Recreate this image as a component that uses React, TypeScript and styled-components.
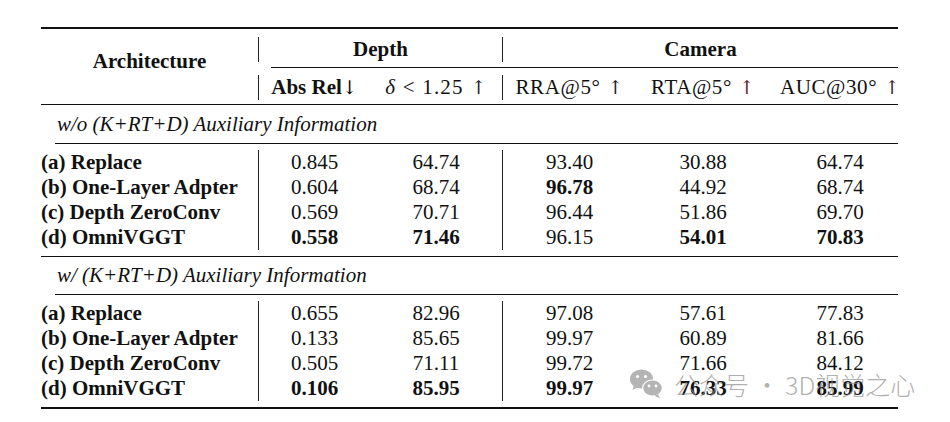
import React from "react";
import styled, { createGlobalStyle } from "styled-components";

const Global = createGlobalStyle`
  html, body { margin: 0; padding: 0; background: #ffffff; }
  body { font-family: "Liberation Serif", "Times New Roman", serif; color: #111; }
`;

const COLS = "217px 112px 132px 134px 134px 128px";

const Page = styled.div`
  position: relative;
  width: 950px;
  height: 422px;
  padding-top: 27px;
  box-sizing: border-box;
`;

const Table = styled.div`
  margin-left: 41px;
  width: 857px;
  display: flex;
  flex-direction: column;
  font-size: 21px;
`;

const Rule = styled.div<{ $h?: number; $indent?: number }>`
  height: ${(p) => p.$h ?? 1}px;
  background: #111;
  margin-left: ${(p) => p.$indent ?? 0}px;
`;

const HeaderGrid = styled.div`
  display: grid;
  grid-template-columns: ${COLS};
  grid-template-rows: 38px 1px 36px;
`;

const ArchCell = styled.div`
  grid-column: 1;
  grid-row: 1 / 4;
  display: flex;
  align-items: center;
  justify-content: center;
  padding-bottom: 11px;
  font-weight: bold;
`;

const GroupHead = styled.div<{ $col: string }>`
  grid-column: ${(p) => p.$col};
  grid-row: 1;
  margin: 8px 0 5px;
  border-left: 1px solid #222;
  display: flex;
  align-items: center;
  justify-content: center;
  font-weight: bold;
  line-height: 1;
`;

const CmidLine = styled.div`
  grid-column: 2 / 7;
  grid-row: 2;
  margin-left: 13px;
  background: #111;
`;

const SubHead = styled.div<{ $bar?: boolean; $shift?: number; $bold?: boolean }>`
  grid-row: 3;
  margin: 7px 0 4px;
  border-left: ${(p) => (p.$bar ? "1px solid #222" : "none")};
  padding-left: ${(p) => p.$shift ?? 0}px;
  display: flex;
  align-items: center;
  justify-content: center;
  font-weight: ${(p) => (p.$bold ? "bold" : "normal")};
  line-height: 1;
  white-space: nowrap;
`;

const Math = styled.span<{ $ls?: number }>`
  letter-spacing: ${(p) => p.$ls ?? 0.6}px;
`;

const Italic = styled.i`
  font-style: italic;
`;

const Arrow = styled.span<{ $color?: string }>`
  font-weight: normal;
  color: ${(p) => p.$color ?? "#111"};
  margin-left: ${(p) => (p.$color ? "7px" : "0px")};
  font-family: "DejaVu Serif", "Liberation Serif", serif;
  font-size: 19px;
`;

const SectionTitle = styled.div<{ $h: number }>`
  height: ${(p) => p.$h}px;
  display: flex;
  align-items: center;
  padding-left: 16px;
  font-style: italic;
`;

const Body = styled.div`
  display: grid;
  grid-template-columns: ${COLS};
  grid-auto-rows: 25px;
  padding: 6px 0 6px;
`;

const Label = styled.div`
  display: flex;
  align-items: center;
  font-weight: bold;
  white-space: nowrap;
`;

const Num = styled.div<{ $bold?: boolean; $bar?: boolean; $shift?: number }>`
  display: flex;
  align-items: center;
  justify-content: center;
  font-weight: ${(p) => (p.$bold ? "bold" : "normal")};
  border-left: ${(p) => (p.$bar ? "1px solid #222" : "none")};
  padding-left: ${(p) => p.$shift ?? 0}px;
`;

const Watermark = styled.div`
  position: absolute;
  left: 629px;
  top: 366px;
  display: flex;
  align-items: center;
  gap: 9px;
  pointer-events: none;
`;

const WatermarkText = styled.span`
  font-family: "Noto Sans CJK SC", "Noto Sans", sans-serif;
  font-size: 25px;
  font-weight: 300;
  color: rgba(140, 140, 140, 0.7);
  white-space: nowrap;
`;

type Cell = { v: string; b?: boolean };
type Row = { label: string; cells: Cell[] };

const sections: { title: string; h: number; rows: Row[] }[] = [
  {
    title: "w/o (K+RT+D) Auxiliary Information",
    h: 38,
    rows: [
      { label: "(a) Replace", cells: [{ v: "0.845" }, { v: "64.74" }, { v: "93.40" }, { v: "30.88" }, { v: "64.74" }] },
      { label: "(b) One-Layer Adpter", cells: [{ v: "0.604" }, { v: "68.74" }, { v: "96.78", b: true }, { v: "44.92" }, { v: "68.74" }] },
      { label: "(c) Depth ZeroConv", cells: [{ v: "0.569" }, { v: "70.71" }, { v: "96.44" }, { v: "51.86" }, { v: "69.70" }] },
      { label: "(d) OmniVGGT", cells: [{ v: "0.558", b: true }, { v: "71.46", b: true }, { v: "96.15" }, { v: "54.01", b: true }, { v: "70.83", b: true }] },
    ],
  },
  {
    title: "w/ (K+RT+D) Auxiliary Information",
    h: 37,
    rows: [
      { label: "(a) Replace", cells: [{ v: "0.655" }, { v: "82.96" }, { v: "97.08" }, { v: "57.61" }, { v: "77.83" }] },
      { label: "(b) One-Layer Adpter", cells: [{ v: "0.133" }, { v: "85.65" }, { v: "99.97" }, { v: "60.89" }, { v: "81.66" }] },
      { label: "(c) Depth ZeroConv", cells: [{ v: "0.505" }, { v: "71.11" }, { v: "99.72" }, { v: "71.66" }, { v: "84.12" }] },
      { label: "(d) OmniVGGT", cells: [{ v: "0.106", b: true }, { v: "85.95", b: true }, { v: "99.97", b: true }, { v: "76.33", b: true }, { v: "85.99", b: true }] },
    ],
  },
];

const WeChatIcon = () => (
  <svg width="36" height="32" viewBox="0 0 36 32">
    <ellipse cx="12.5" cy="11" rx="11.5" ry="9.5" fill="#b4b4b4" />
    <path d="M5 17 L3.5 22 L9.5 19 Z" fill="#b4b4b4" />
    <circle cx="8.5" cy="8.5" r="1.6" fill="#fff" />
    <circle cx="16.5" cy="8.5" r="1.6" fill="#fff" />
    <ellipse cx="23.5" cy="20" rx="10.5" ry="8.5" fill="#fff" />
    <ellipse cx="23.5" cy="20" rx="9.3" ry="7.5" fill="#b4b4b4" />
    <path d="M29 26 L31 30.5 L25.5 27.5 Z" fill="#b4b4b4" />
    <circle cx="20" cy="18" r="1.4" fill="#fff" />
    <circle cx="27" cy="18" r="1.4" fill="#fff" />
  </svg>
);

export default function App() {
  return (
    <Page>
      <Global />
      <Table>
        <Rule $h={2} />
        <HeaderGrid>
          <ArchCell>Architecture</ArchCell>
          <GroupHead $col="2 / 4">Depth</GroupHead>
          <GroupHead $col="4 / 7">Camera</GroupHead>
          <CmidLine />
          <SubHead $bar $bold>
            Abs Rel<Arrow>↓</Arrow>
          </SubHead>
          <SubHead>
            <Math $ls={1.2}>
              <Italic>δ</Italic> &lt; 1.25
            </Math>
            <Arrow $color="#1c1c2c">↑</Arrow>
          </SubHead>
          <SubHead $bar>
            <Math>RRA@5°</Math>
            <Arrow $color="#1c1c30">↑</Arrow>
          </SubHead>
          <SubHead>
            <Math>RTA@5°</Math>
            <Arrow $color="#5a1a30">↑</Arrow>
          </SubHead>
          <SubHead $shift={12}>
            <Math>AUC@30°</Math>
            <Arrow $color="#4a1a2c">↑</Arrow>
          </SubHead>
        </HeaderGrid>
        {sections.map((s, si) => (
          <React.Fragment key={si}>
            <Rule />
            <SectionTitle $h={s.h}>{s.title}</SectionTitle>
            <Rule $indent={14} />
            <Body>
              {s.rows.map((r, ri) => (
                <React.Fragment key={ri}>
                  <Label>{r.label}</Label>
                  {r.cells.map((c, ci) => (
                    <Num key={ci} $bold={c.b} $bar={ci === 0 || ci === 2} $shift={ci === 4 ? 12 : 0}>
                      {c.v}
                    </Num>
                  ))}
                </React.Fragment>
              ))}
            </Body>
          </React.Fragment>
        ))}
        <Rule $h={2} />
      </Table>
      <Watermark>
        <WeChatIcon />
        <WatermarkText>公众号 · 3D视觉之心</WatermarkText>
      </Watermark>
    </Page>
  );
}
